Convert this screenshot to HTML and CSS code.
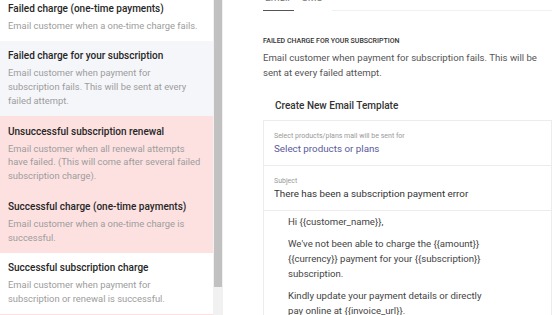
FILE: index.html
```html
<!DOCTYPE html>
<html lang="en">
<head>
    <meta charset="UTF-8">
    <meta name="viewport" content="width=device-width, initial-scale=1.0">
    <title>Email Notifications</title>
    <link rel="stylesheet" href="styles.css">
</head>
<body>

    <!-- Notification list -->
    <aside class="sidebar">
        <div class="event-list">
            <div class="event">
                <div class="event-title">Failed charge (one-time payments)</div>
                <div class="event-desc">Email customer when a one-time charge fails.</div>
            </div>
            <div class="event selected">
                <div class="event-title">Failed charge for your subscription</div>
                <div class="event-desc">Email customer when payment for subscription fails. This will be sent at every failed attempt.</div>
            </div>
            <div class="event warn">
                <div class="event-title">Unsuccessful subscription renewal</div>
                <div class="event-desc">Email customer when all renewal attempts have failed. (This will come after several failed subscription charge).</div>
            </div>
            <div class="event warn">
                <div class="event-title">Successful charge (one-time payments)</div>
                <div class="event-desc">Email customer when a one-time charge is successful.</div>
            </div>
            <div class="event">
                <div class="event-title">Successful subscription charge</div>
                <div class="event-desc">Email customer when payment for subscription or renewal is successful.</div>
            </div>
            <div class="event warn"></div>
        </div>
        <div class="scroll-track"><div class="scroll-thumb"></div></div>
    </aside>

    <!-- Template editor -->
    <main class="main">
        <div class="tabs">
            <span class="tab active">Email</span>
            <span class="tab">SMS</span>
            <span class="tab-fill"></span>
        </div>

        <div class="section-label">FAILED CHARGE FOR YOUR SUBSCRIPTION</div>
        <p class="section-desc">Email customer when payment for subscription fails. This will be sent at every failed attempt.</p>

        <h3 class="template-title">Create New Email Template</h3>

        <div class="template-box">
            <div class="field">
                <div class="field-label">Select products/plans mail will be sent for</div>
                <div class="field-value link">Select products or plans</div>
            </div>
            <div class="field">
                <div class="field-label">Subject</div>
                <div class="field-value">There has been a subscription payment error</div>
            </div>
            <div class="mail-body">
                <p>Hi {{customer_name}},</p>
                <p>We've not been able to charge the {{amount}} {{currency}} payment for your {{subscription}} subscription.</p>
                <p>Kindly update your payment details or directly pay online at {{invoice_url}}.</p>
            </div>
        </div>
    </main>

</body>
</html>
```

FILE: styles.css
```css
/* General page styling */
body {
    margin: 0;
    height: 315px;
    overflow: hidden;
    display: flex;
    font-family: Roboto, "Open Sans", sans-serif;
    background-color: white;
    color: #333;
}

/* Left list of notification events */
.sidebar {
    width: 223px;
    flex-shrink: 0;
    display: flex;
    overflow: hidden;
}

.event-list {
    width: 213px;
    margin-top: -7px;
}

.event {
    padding: 8.5px 9px 8.5px 8px;
    background-color: white;
}

.event.selected {
    background-color: #f5f6fa;
}

.event.warn {
    background-color: #fde1e1;
}

.event:last-child {
    height: 40px;
}

.event-title {
    font-size: 10px;
    font-weight: 500;
    line-height: 14px;
    color: #262626;
    margin-bottom: 3px;
}

.event-desc {
    font-size: 9.4px;
    line-height: 13.75px;
    color: #9c9c9c;
}

.scroll-track {
    width: 10px;
    background-color: #f1f1f1;
    padding: 0 1px;
    box-sizing: border-box;
}

.scroll-thumb {
    height: 287px;
    background-color: #c1c1c1;
}

/* Right side */
.main {
    flex: 1;
    padding: 0 8px 0 40px;
}

.tabs {
    display: flex;
    margin-top: -9px;
    font-size: 10px;
    line-height: 14px;
    color: #777;
}

.tab {
    padding: 0 4px 5px 2px;
    margin-right: 6px;
}

.tab.active {
    border-bottom: 1.5px solid #555;
}

.tab-fill {
    flex: 1;
    border-bottom: 1px solid #f0f0f0;
}

.section-label {
    margin-top: 25px;
    font-size: 7px;
    font-weight: 500;
    line-height: 10px;
    color: #333;
}

.section-desc {
    margin: 4px 0 0;
    font-size: 9.6px;
    line-height: 15px;
    color: #555;
}

.template-title {
    margin: 19px 0 0 12px;
    font-size: 10px;
    font-weight: 500;
    line-height: 14px;
    color: #333;
}

.template-box {
    margin-top: 7px;
    border: 1px solid #ececec;
}

.field {
    padding: 10px 10px 9px;
    border-bottom: 1px solid #ececec;
}

.field-label {
    font-size: 7px;
    line-height: 11px;
    color: #999;
}

.field-value {
    font-size: 9.8px;
    line-height: 14px;
    color: #333;
}

.field-value.link {
    color: #5a5a9c;
}

.mail-body {
    padding: 3px 24px 10px;
    width: 210px;
    font-size: 9.6px;
    line-height: 15px;
    color: #444;
}

.mail-body p {
    margin: 0 0 7px;
}
```
